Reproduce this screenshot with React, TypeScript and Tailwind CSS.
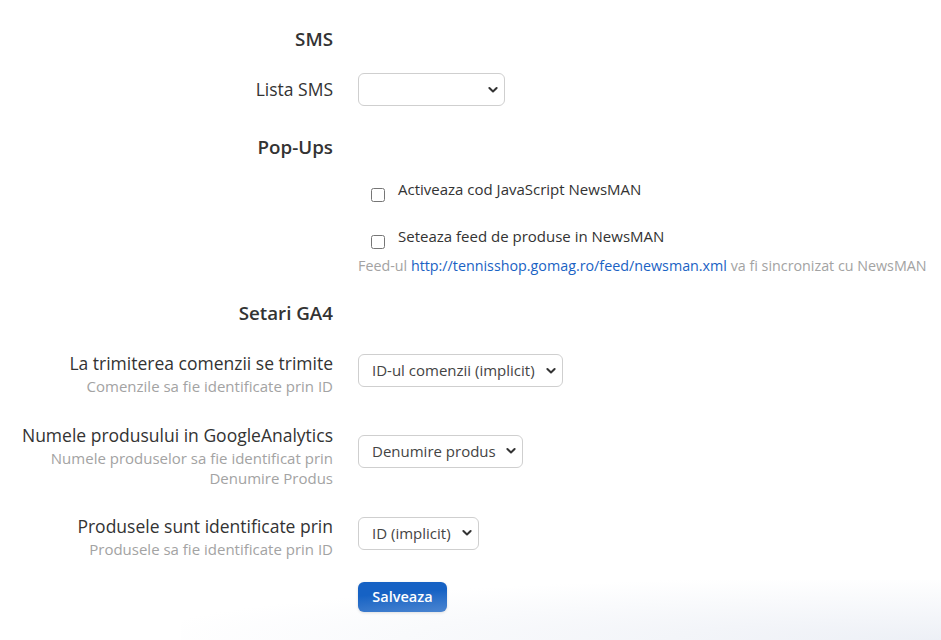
import React from "react";

const font = { fontFamily: '"Open Sans", "Noto Sans", sans-serif' };

function Chevron() {
  return (
    <svg
      width="10"
      height="7"
      viewBox="0 0 10 7"
      className="pointer-events-none absolute right-[7px] top-1/2 -translate-y-1/2"
    >
      <path d="M1.4 1.5 5 5 8.6 1.5" fill="none" stroke="#333" strokeWidth="2" strokeLinecap="round" strokeLinejoin="round" />
    </svg>
  );
}

function Select({ value, width }: { value: string; width: string }) {
  return (
    <div className={`relative ${width}`}>
      <select
        className="h-[33px] w-full appearance-none rounded-[6px] border border-[#cfcfcf] bg-white pl-[13px] pr-[20px] text-[15px] text-[#444] outline-none"
        defaultValue={value}
      >
        <option value={value}>{value}</option>
      </select>
      <Chevron />
    </div>
  );
}

function Heading({ children, mt }: { children: React.ReactNode; mt: string }) {
  return (
    <div className={`flex ${mt}`}>
      <div className="w-[318px] shrink-0 text-right text-[18.75px] font-semibold leading-[27px] text-[#333]">
        {children}
      </div>
    </div>
  );
}

function FieldRow({
  label,
  hint,
  mt,
  selectMt,
  children,
}: {
  label: string;
  hint?: React.ReactNode;
  mt: string;
  selectMt: string;
  children: React.ReactNode;
}) {
  return (
    <div className={`flex items-start gap-[25px] ${mt}`}>
      <div className="w-[318px] shrink-0 text-right">
        <div className="text-[17.5px] leading-[25px] text-[#333]">{label}</div>
        {hint && <div className="text-[15px] leading-[20px] text-[#a3a3a3]">{hint}</div>}
      </div>
      <div className={selectMt}>{children}</div>
    </div>
  );
}

function CheckRow({ label, mt }: { label: string; mt: string }) {
  return (
    <div className={`flex ${mt}`}>
      <div className="ml-[356px] flex items-start gap-[13px]">
        <input type="checkbox" className="mt-[10px] h-[14px] w-[14px]" />
        <span className="text-[15px] leading-[22px] text-[#333]">{label}</span>
      </div>
    </div>
  );
}

export default function App() {
  return (
    <div className="relative h-[640px] w-full overflow-hidden bg-white" style={font}>
      <div className="pl-[15px] pt-[24.5px]">
        <Heading mt="mt-0">SMS</Heading>

        <div className="mt-[21.5px] flex items-center gap-[25px]">
          <div className="w-[318px] shrink-0 text-right text-[17.5px] leading-[25px] text-[#333]">Lista SMS</div>
          <Select value="" width="w-[147px]" />
        </div>

        <Heading mt="mt-[27px]">Pop-Ups</Heading>

        <CheckRow label="Activeaza cod JavaScript NewsMAN" mt="mt-[18px]" />
        <CheckRow label="Seteaza feed de produse in NewsMAN" mt="mt-[23px]" />

        <div className="ml-[343px] mt-[7px] text-[14.3px] leading-[20px] text-[#a3a3a3]">
          Feed-ul{" "}
          <a href="#" className="text-[#1a62c4]">
            http://tennisshop.gomag.ro/feed/newsman.xml
          </a>{" "}
          va fi sincronizat cu NewsMAN
        </div>

        <Heading mt="mt-[22.5px]">Setari GA4</Heading>

        <FieldRow
          label="La trimiterea comenzii se trimite"
          hint="Comenzile sa fie identificate prin ID"
          mt="mt-[25px]"
          selectMt="mt-[3.5px]"
        >
          <Select value="ID-ul comenzii (implicit)" width="w-[205px]" />
        </FieldRow>

        <FieldRow
          label="Numele produsului in GoogleAnalytics"
          hint={
            <>
              Numele produselor sa fie identificat prin
              <br />
              Denumire Produs
            </>
          }
          mt="mt-[27px]"
          selectMt="mt-[12px]"
        >
          <Select value="Denumire produs" width="w-[165px]" />
        </FieldRow>

        <FieldRow
          label="Produsele sunt identificate prin"
          hint="Produsele sa fie identificate prin ID"
          mt="mt-[26px]"
          selectMt="mt-[3px]"
        >
          <Select value="ID (implicit)" width="w-[121px]" />
        </FieldRow>

        <div className="ml-[343px] mt-[23.5px]">
          <button className="h-[30px] w-[89px] rounded-[6px] bg-[#1662c4] text-[14.5px] font-semibold text-white shadow-[0_1px_3px_rgba(0,0,0,0.15)]">
            Salveaza
          </button>
        </div>
      </div>

      <div className="pointer-events-none absolute bottom-0 right-0 h-[60px] w-[760px] bg-[radial-gradient(ellipse_at_bottom_right,#edf0f6_0%,rgba(255,255,255,0)_75%)]" />
    </div>
  );
}
